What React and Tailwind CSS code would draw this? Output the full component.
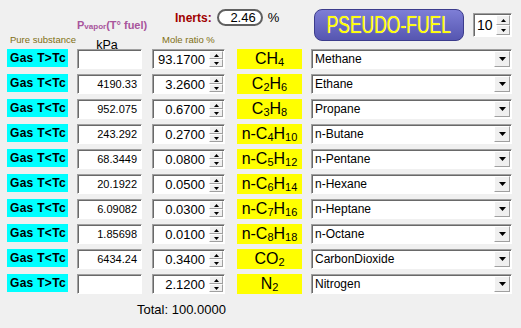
import React from "react";

const FONT = { fontFamily: '"Liberation Sans", Arial, sans-serif' };

const sunken =
  "border border-t-[#a0a0a0] border-l-[#a0a0a0] border-b-white border-r-white shadow-[inset_1px_1px_0_#696969]";

const rows = [
  { label: "Gas T>Tc", kpa: "", mole: "93.1700", f: ["CH", "4"], name: "Methane" },
  { label: "Gas T<Tc", kpa: "4190.33", mole: "3.2600", f: ["C", "2", "H", "6"], name: "Ethane" },
  { label: "Gas T<Tc", kpa: "952.075", mole: "0.6700", f: ["C", "3", "H", "8"], name: "Propane" },
  { label: "Gas T<Tc", kpa: "243.292", mole: "0.2700", f: ["n-C", "4", "H", "10"], name: "n-Butane" },
  { label: "Gas T<Tc", kpa: "68.3449", mole: "0.0800", f: ["n-C", "5", "H", "12"], name: "n-Pentane" },
  { label: "Gas T<Tc", kpa: "20.1922", mole: "0.0500", f: ["n-C", "6", "H", "14"], name: "n-Hexane" },
  { label: "Gas T<Tc", kpa: "6.09082", mole: "0.0300", f: ["n-C", "7", "H", "16"], name: "n-Heptane" },
  { label: "Gas T<Tc", kpa: "1.85698", mole: "0.0100", f: ["n-C", "8", "H", "18"], name: "n-Octane" },
  { label: "Gas T<Tc", kpa: "6434.24", mole: "0.3400", f: ["CO", "2"], name: "CarbonDioxide" },
  { label: "Gas T>Tc", kpa: "", mole: "2.1200", f: ["N", "2"], name: "Nitrogen" },
];

function Tri({ up }) {
  return (
    <svg width="5" height="3" viewBox="0 0 5 3" className="block">
      {up ? <path d="M0 3 L5 3 L2.5 0 Z" fill="#000" /> : <path d="M0 0 L5 0 L2.5 3 Z" fill="#000" />}
    </svg>
  );
}

function SpinBtns() {
  return (
    <div className="flex flex-col w-[15px] h-full py-[1px] pr-[1px]">
      <div className="flex-1 flex items-center justify-center bg-[#f0f0f0] border border-t-white border-l-white border-b-[#a0a0a0] border-r-[#a0a0a0]">
        <Tri up />
      </div>
      <div className="flex-1 flex items-center justify-center bg-[#f0f0f0] border border-t-white border-l-white border-b-[#a0a0a0] border-r-[#a0a0a0]">
        <Tri />
      </div>
    </div>
  );
}

function Formula({ parts }) {
  return (
    <span className="text-[16px] leading-none text-black">
      {parts.map((p, i) =>
        i % 2 === 0 ? (
          <span key={i}>{p}</span>
        ) : (
          <sub key={i} className="text-[11px]">{p}</sub>
        )
      )}
    </span>
  );
}

function Row({ r }) {
  return (
    <div className="flex items-start h-[20px]">
      <div className="ml-[7px] w-[61px] h-[18px] bg-[#00ffff] flex items-center pl-[3px] font-bold text-[12px] tracking-[0.3px] text-black leading-none whitespace-nowrap">
        {r.label}
      </div>
      <div className={`ml-[9px] w-[65px] h-[20px] bg-white ${sunken} flex items-center justify-end pr-[4px] text-[11px] text-black`}>
        {r.kpa}
      </div>
      <div className={`ml-[10px] w-[73px] h-[20px] bg-white ${sunken} flex items-center`}>
        <span className="flex-1 text-right pr-[4px] text-[13px] text-black leading-none">{r.mole}</span>
        <SpinBtns />
      </div>
      <div className="ml-[12px] w-[65px] h-[20px] bg-[#ffff00] flex items-center justify-center pb-[1px]">
        <Formula parts={r.f} />
      </div>
      <div className={`ml-[9px] w-[201px] h-[20px] bg-white ${sunken} flex items-center`}>
        <span className="flex-1 pl-[3px] text-[12px] text-black leading-none">{r.name}</span>
        <div className="w-[17px] h-full py-[1px] pr-[1px]">
          <div className="h-full flex items-center justify-center bg-[#f0f0f0] border border-t-white border-l-white border-b-[#a0a0a0] border-r-[#a0a0a0]">
            <svg width="7" height="4" viewBox="0 0 7 4" className="block">
              <path d="M0 0 L7 0 L3.5 4 Z" fill="#000" />
            </svg>
          </div>
        </div>
      </div>
    </div>
  );
}

export default function App() {
  return (
    <div className="w-[521px] h-[328px] bg-[#f0f0f0] overflow-hidden" style={FONT}>
      {/* header */}
      <div className="flex h-[49px]">
        <div className="ml-[7px] w-[61px] flex flex-col">
          <div className="mt-[34px] pl-[3px] text-[9.5px] leading-[12px] text-[#7f6f12] whitespace-nowrap">Pure substance</div>
        </div>
        <div className="ml-[9px] w-[65px] flex flex-col">
          <div className="mt-[18px] text-[11px] leading-[14px] font-bold text-[#a8559c] whitespace-nowrap">
            P<span className="text-[8px]">vapor</span>(T° fuel)
          </div>
          <div className="mt-[5px] text-[12.5px] leading-[12px] text-black text-center pr-[5px]">kPa</div>
        </div>
        <div className="ml-[10px] w-[150px] flex flex-col">
          <div className="mt-[9px] ml-[23px] flex items-center h-[17px]">
            <span className="font-bold text-[12px] text-[#a00000] leading-none">Inerts:</span>
            <div className="ml-[5px] w-[46px] h-[17px] rounded-full border-2 border-[#606060] bg-white flex items-center justify-end pr-[5px] text-[13px] text-black leading-none">
              2.46
            </div>
            <span className="ml-[5px] text-[13px] text-black leading-none">%</span>
          </div>
          <div className="mt-[8px] ml-[10px] text-[9.5px] leading-[12px] text-[#7f6f12] whitespace-nowrap">Mole ratio %</div>
        </div>
        <div className="ml-[9px] flex items-start">
          <div className="ml-[3px] mt-[9px] w-[150px] h-[32px] rounded-[8px] border border-[#3c3c8c] bg-gradient-to-b from-[#7e7ed6] to-[#5656b0] flex items-center justify-center overflow-hidden">
            <span className="inline-block scale-x-[0.76] text-[23px] leading-none text-[#ffff00] whitespace-nowrap [text-shadow:0_0_1px_#fffff0]">
              PSEUDO-FUEL
            </span>
          </div>
          <div className={`ml-[9px] mt-[13px] w-[39px] h-[24px] bg-white ${sunken} flex items-center`}>
            <span className="flex-1 pl-[3px] text-[14px] text-black leading-none">10</span>
            <SpinBtns />
          </div>
        </div>
      </div>
      {/* rows */}
      <div className="flex flex-col gap-[5px]">
        {rows.map((r, i) => (
          <Row key={i} r={r} />
        ))}
      </div>
      <div className="mt-[8px] ml-[137px] text-[13px] leading-[16px] text-black">Total: 100.0000</div>
    </div>
  );
}
